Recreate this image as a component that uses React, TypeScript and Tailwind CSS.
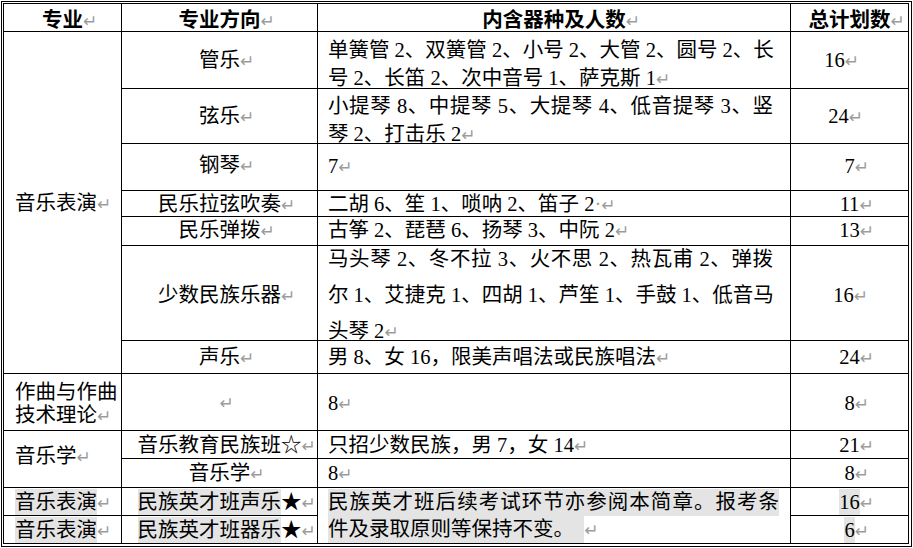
import React from "react";

const Mark = () => (
  <span className="inline-block w-[13px] -mr-[13px] text-left font-['DejaVu_Sans',sans-serif] text-[17px] leading-none text-[#9c9c9c] font-normal">↵</span>
);

const Cell = ({ className = "", children }: { className?: string; children?: React.ReactNode }) => (
  <div className={"bg-white flex " + className}>{children}</div>
);

export default function App() {
  return (
    <div className="w-[913px] h-[548px] bg-white font-['Liberation_Serif','Noto_Sans_CJK_SC',serif] text-[20.5px] text-black overflow-hidden">
      <div className="ml-px mt-px w-[911px] border border-black pt-px pl-px pr-[2px] pb-[2px]">
        <div className="grid bg-black p-px gap-px grid-cols-[117px_195px_472px_117px] grid-rows-[27px_56px_54px_46px_25px_28px_94px_32px_56px_27px_28px_27px_27px] leading-[26px]">
          {/* header */}
          <Cell className="col-start-1 row-start-1 items-center justify-center font-['Noto_Sans_CJK_SC',sans-serif] font-bold">
            <span>专业<Mark /></span>
          </Cell>
          <Cell className="col-start-2 row-start-1 items-center justify-center font-['Noto_Sans_CJK_SC',sans-serif] font-bold">
            <span>专业方向<Mark /></span>
          </Cell>
          <Cell className="col-start-3 row-start-1 items-center justify-center font-['Noto_Sans_CJK_SC',sans-serif] font-bold">
            <span>内含器种及人数<Mark /></span>
          </Cell>
          <Cell className="col-start-4 row-start-1 items-center justify-center font-['Noto_Sans_CJK_SC',sans-serif] font-bold">
            <span>总计划数<Mark /></span>
          </Cell>

          {/* 音乐表演 */}
          <Cell className="col-start-1 row-start-2 row-span-7 items-center pl-[11px]">
            <span>音乐表演<Mark /></span>
          </Cell>

          {/* 管乐 */}
          <Cell className="col-start-2 row-start-2 items-center justify-center">
            <span>管乐<Mark /></span>
          </Cell>
          <Cell className="col-start-3 row-start-2 flex-col pl-[10px] pt-[4px] leading-[28px]">
            <div className="w-[445px] whitespace-nowrap text-justify [text-align-last:justify]">单簧管 2、双簧管 2、小号 2、大管 2、圆号 2、长</div>
            <div className="whitespace-nowrap">号 2、长笛 2、次中音号 1、萨克斯 1<Mark /></div>
          </Cell>
          <Cell className="col-start-4 row-start-2 items-center justify-center pr-[30px]">
            <span>16<Mark /></span>
          </Cell>

          {/* 弦乐 */}
          <Cell className="col-start-2 row-start-3 items-center justify-center">
            <span>弦乐<Mark /></span>
          </Cell>
          <Cell className="col-start-3 row-start-3 flex-col pl-[10px] pt-[3px] leading-[28px]">
            <div className="w-[445px] whitespace-nowrap text-justify [text-align-last:justify]">小提琴 8、中提琴 5、大提琴 4、低音提琴 3、竖</div>
            <div className="whitespace-nowrap">琴 2、打击乐 2<Mark /></div>
          </Cell>
          <Cell className="col-start-4 row-start-3 items-center justify-center pr-[22px]">
            <span>24<Mark /></span>
          </Cell>

          {/* 钢琴 */}
          <Cell className="col-start-2 row-start-4 items-center justify-center pb-[5px]">
            <span>钢琴<Mark /></span>
          </Cell>
          <Cell className="col-start-3 row-start-4 items-center pl-[10px] pb-[3px]">
            <span>7<Mark /></span>
          </Cell>
          <Cell className="col-start-4 row-start-4 items-center justify-center pb-[3px]">
            <span>7<Mark /></span>
          </Cell>

          {/* 民乐拉弦吹奏 */}
          <Cell className="col-start-2 row-start-5 items-center justify-center">
            <span>民乐拉弦吹奏<Mark /></span>
          </Cell>
          <Cell className="col-start-3 row-start-5 items-center pl-[10px] whitespace-nowrap">
            <span>二胡 6、笙 1、唢呐 2、笛子 2<span className="text-[#9c9c9c]">·</span><Mark /></span>
          </Cell>
          <Cell className="col-start-4 row-start-5 items-center justify-center">
            <span>11<Mark /></span>
          </Cell>

          {/* 民乐弹拨 */}
          <Cell className="col-start-2 row-start-6 items-center justify-center pb-[3px]">
            <span>民乐弹拨<Mark /></span>
          </Cell>
          <Cell className="col-start-3 row-start-6 items-center pl-[10px] whitespace-nowrap pb-[3px]">
            <span>古筝 2、琵琶 6、扬琴 3、中阮 2<Mark /></span>
          </Cell>
          <Cell className="col-start-4 row-start-6 items-center justify-center pb-[3px]">
            <span>13<Mark /></span>
          </Cell>

          {/* 少数民族乐器 */}
          <Cell className="col-start-2 row-start-7 items-center justify-center pt-[3px]">
            <span>少数民族乐器<Mark /></span>
          </Cell>
          <Cell className="col-start-3 row-start-7 flex-col justify-center pl-[10px] pt-[3px] leading-[36px]">
            <div className="w-[445px] whitespace-nowrap text-justify [text-align-last:justify]">马头琴 2、冬不拉 3、火不思 2、热瓦甫 2、弹拨</div>
            <div className="w-[445px] whitespace-nowrap text-justify [text-align-last:justify]">尔 1、艾捷克 1、四胡 1、芦笙 1、手鼓 1、低音马</div>
            <div className="whitespace-nowrap">头琴 2<Mark /></div>
          </Cell>
          <Cell className="col-start-4 row-start-7 items-center justify-center pr-[12px] pt-[3px]">
            <span>16<Mark /></span>
          </Cell>

          {/* 声乐 */}
          <Cell className="col-start-2 row-start-8 items-center justify-center">
            <span>声乐<Mark /></span>
          </Cell>
          <Cell className="col-start-3 row-start-8 items-center pl-[10px] whitespace-nowrap">
            <span>男 8、女 16，限美声唱法或民族唱法<Mark /></span>
          </Cell>
          <Cell className="col-start-4 row-start-8 items-center justify-center">
            <span>24<Mark /></span>
          </Cell>

          {/* 作曲与作曲技术理论 */}
          <Cell className="col-start-1 row-start-9 flex-col justify-center pl-[11px] leading-[23px] pt-[4px]">
            <div>作曲与作曲</div>
            <div>技术理论<Mark /></div>
          </Cell>
          <Cell className="col-start-2 row-start-9 items-center justify-center">
            <span><Mark /></span>
          </Cell>
          <Cell className="col-start-3 row-start-9 items-center pl-[10px] pt-[2px]">
            <span>8<Mark /></span>
          </Cell>
          <Cell className="col-start-4 row-start-9 items-center justify-center pt-[2px]">
            <span>8<Mark /></span>
          </Cell>

          {/* 音乐学 */}
          <Cell className="col-start-1 row-start-10 row-span-2 items-center pl-[11px] pb-[6px]">
            <span>音乐学<Mark /></span>
          </Cell>
          <Cell className="col-start-2 row-start-10 items-center justify-center">
            <span>音乐教育民族班☆<Mark /></span>
          </Cell>
          <Cell className="col-start-3 row-start-10 items-center pl-[10px] whitespace-nowrap">
            <span>只招少数民族，男 7，女 14<Mark /></span>
          </Cell>
          <Cell className="col-start-4 row-start-10 items-center justify-center">
            <span>21<Mark /></span>
          </Cell>
          <Cell className="col-start-2 row-start-11 items-center justify-center">
            <span>音乐学<Mark /></span>
          </Cell>
          <Cell className="col-start-3 row-start-11 items-center pl-[10px]">
            <span>8<Mark /></span>
          </Cell>
          <Cell className="col-start-4 row-start-11 items-center justify-center">
            <span>8<Mark /></span>
          </Cell>

          {/* 民族英才班 */}
          <Cell className="col-start-1 row-start-12 items-center pl-[11px]">
            <span><span className="inline-block bg-[#e4e4e4] leading-[26px]">音乐表演</span><Mark /></span>
          </Cell>
          <Cell className="col-start-2 row-start-12 items-center justify-center">
            <span><span className="inline-block bg-[#e4e4e4] leading-[26px]">民族英才班声乐</span>★<Mark /></span>
          </Cell>
          <Cell className="col-start-3 row-start-12 row-span-2 flex-col justify-center pl-[10px] leading-[27px]">
            <div className="w-[451px] bg-[#e4e4e4] whitespace-nowrap text-justify [text-align-last:justify]">民族英才班后续考试环节亦参阅本简章。报考条</div>
            <div className="whitespace-nowrap"><span className="inline-block bg-[#e4e4e4]">件及录取原则等保持不变。　</span><Mark /></div>
          </Cell>
          <Cell className="col-start-4 row-start-12 items-center justify-center">
            <span><span className="inline-block bg-[#e4e4e4] leading-[26px]">16</span><Mark /></span>
          </Cell>
          <Cell className="col-start-1 row-start-13 items-center pl-[11px]">
            <span><span className="inline-block bg-[#e4e4e4] leading-[26px]">音乐表演</span><Mark /></span>
          </Cell>
          <Cell className="col-start-2 row-start-13 items-center justify-center">
            <span><span className="inline-block bg-[#e4e4e4] leading-[26px]">民族英才班器乐</span>★<Mark /></span>
          </Cell>
          <Cell className="col-start-4 row-start-13 items-center justify-center">
            <span><span className="inline-block bg-[#e4e4e4] leading-[26px]">6</span><Mark /></span>
          </Cell>
        </div>
      </div>
    </div>
  );
}
